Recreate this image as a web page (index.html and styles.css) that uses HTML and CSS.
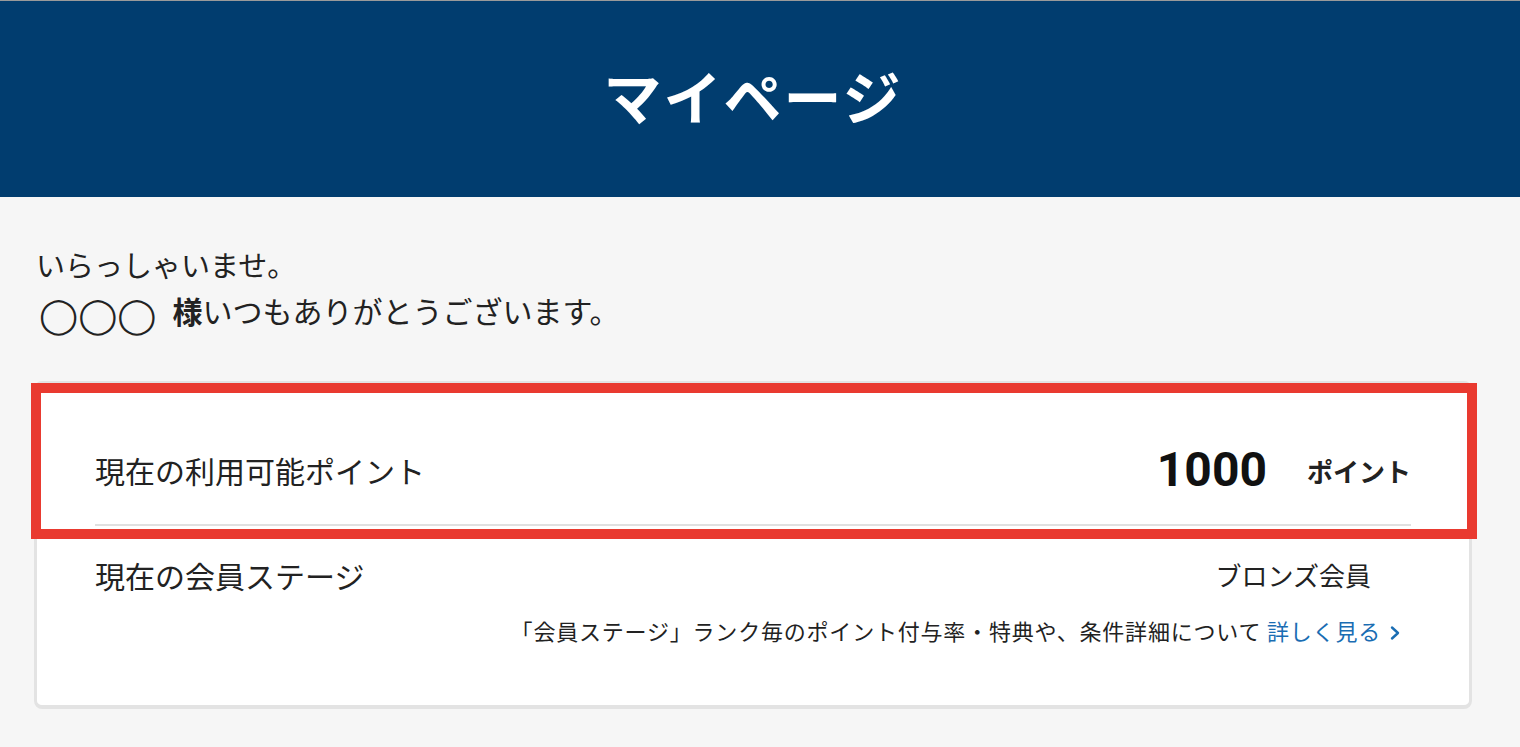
FILE: index.html
```html
<!DOCTYPE html>
<html lang="ja">
<head>
<meta charset="utf-8">
<title>マイページ</title>
<link rel="stylesheet" href="styles.css">
</head>
<body>
<header class="page-header">
  <h1 class="page-title">マイページ</h1>
</header>
<main class="main">
  <div class="greeting">
    <p class="greeting-line">いらっしゃいませ。</p>
    <p class="greeting-line greeting-line-2"><span class="circles">◯◯◯</span><strong class="sama">様</strong>いつもありがとうございます。</p>
  </div>
  <section class="card">
    <div class="row row-points">
      <span class="label">現在の利用可能ポイント</span>
      <span class="points"><span class="points-num">1000</span><span class="points-unit">ポイント</span></span>
    </div>
    <div class="row-stage">
      <div class="stage-head">
        <span class="label">現在の会員ステージ</span>
        <span class="stage-value">ブロンズ会員</span>
      </div>
      <p class="note">「会員ステージ」ランク毎のポイント付与率・特典や、条件詳細について <a class="more" href="#">詳しく見る<svg class="chev" width="12" height="16" viewBox="0 0 12 16"><path d="M3 2.5 L9 8 L3 13.5" fill="none" stroke="#1a6db3" stroke-width="2.4" stroke-linecap="round" stroke-linejoin="round"/></svg></a></p>
    </div>
    <div class="highlight"></div>
  </section>
</main>
</body>
</html>
```

FILE: styles.css
```css
html, body {
  margin: 0;
  padding: 0;
}
body {
  background: #f6f6f6;
  font-family: "Noto Sans CJK JP", "Noto Sans", sans-serif;
  color: #222;
  width: 1520px;
}
.page-header {
  height: 196px;
  background: #013d6f;
  border-top: 1px solid #9a9a9a;
  display: flex;
  align-items: center;
  justify-content: center;
}
.page-title {
  margin: 0;
  color: #fff;
  font-size: 58px;
  font-weight: 700;
  letter-spacing: 2px;
  line-height: 1;
  padding-right: 14px;
  padding-bottom: 8px;
}
.main {
  padding: 44px 48px 0 34px;
}
.greeting {
  padding-left: 2px;
}
.greeting-line {
  margin: 0;
  font-size: 29px;
  line-height: 46px;
  height: 46px;
}
.greeting-line-2 {
  font-size: 30px;
}
.circles {
  font-family: "DejaVu Sans", sans-serif;
  font-size: 35px;
  line-height: 1;
  vertical-align: -4px;
  margin-left: 3px;
  margin-right: 16px;
  letter-spacing: 0;
}
.sama {
  font-weight: 700;
}
.card {
  position: relative;
  margin-top: 48px;
  background: #fff;
  border: 3px solid #e3e3e3;
  border-bottom-width: 4px;
  border-radius: 8px;
  width: 1432px;
  box-sizing: content-box;
}
.row-points {
  margin: 0 58px;
  padding: 58px 0 26px;
  border-bottom: 2px solid #e0e0e0;
  display: flex;
  align-items: center;
  justify-content: space-between;
  height: 56px;
}
.label {
  font-size: 30px;
  line-height: 40px;
  color: #222;
}
.points {
  display: flex;
  align-items: center;
}
.points-num {
  font-family: Roboto, "Noto Sans", sans-serif;
  font-weight: 700;
  font-size: 48px;
  line-height: 56px;
  color: #111;
}
.points-unit {
  font-weight: 700;
  font-size: 26px;
  margin-left: 40px;
  color: #222;
}
.row-stage {
  margin: 0 58px;
  padding: 29px 0 60px;
}
.stage-head {
  display: flex;
  align-items: center;
  justify-content: space-between;
}
.stage-value {
  font-size: 26px;
  line-height: 40px;
  margin-right: 40px;
}
.note {
  margin: 20px 0 0;
  text-align: right;
  font-size: 22px;
  letter-spacing: 0.8px;
  line-height: 30px;
  padding-right: 10px;
}
.more {
  color: #1a6db3;
  text-decoration: none;
}
.chev {
  margin-left: 8px;
  vertical-align: -1px;
}
.highlight {
  position: absolute;
  left: -6px;
  right: -8px;
  top: -1px;
  height: 156px;
  box-sizing: border-box;
  border: 10px solid #e93a30;
  pointer-events: none;
}
```
